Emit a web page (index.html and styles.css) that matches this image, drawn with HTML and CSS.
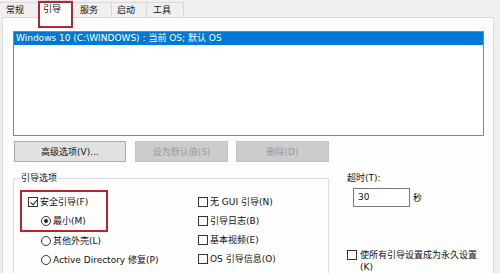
FILE: index.html
```html
<!DOCTYPE html>
<html lang="zh-CN">

<head>
    <meta charset="UTF-8">
    <meta name="viewport" content="width=device-width, initial-scale=1.0">
    <title>系统配置</title>
    <link rel="stylesheet" href="styles.css">
</head>

<body>
    <div class="tabs">
        <div class="tab tab-first">常规</div>
        <div class="tab tab-active">引导</div>
        <div class="tab">服务</div>
        <div class="tab">启动</div>
        <div class="tab">工具</div>
    </div>

    <div class="panel">
        <div class="os-list">
            <div class="os-item selected">Windows 10 (C:\WINDOWS) : 当前 OS; 默认 OS</div>
        </div>

        <div class="btn-row">
            <button class="btn btn-wide">高级选项(V)...</button>
            <button class="btn" disabled>设为默认值(S)</button>
            <button class="btn" disabled>删除(D)</button>
        </div>

        <div class="options">
            <fieldset class="boot-options">
                <legend>引导选项</legend>
                <div class="opt-cols">
                    <div class="opt-col">
                        <div class="mark-box">
                            <div class="opt"><span class="check checked"></span>安全引导(F)</div>
                            <div class="opt sub"><span class="radio on"></span>最小(M)</div>
                        </div>
                        <div class="opt sub"><span class="radio"></span>其他外壳(L)</div>
                        <div class="opt sub"><span class="radio"></span>Active Directory 修复(P)</div>
                    </div>
                    <div class="opt-col opt-col-right">
                        <div class="opt"><span class="check"></span>无 GUI 引导(N)</div>
                        <div class="opt"><span class="check"></span>引导日志(B)</div>
                        <div class="opt"><span class="check"></span>基本视频(E)</div>
                        <div class="opt"><span class="check"></span>OS 引导信息(O)</div>
                    </div>
                </div>
            </fieldset>

            <div class="side">
                <div class="timeout-label">超时(T):</div>
                <div class="timeout-row">
                    <div class="timeout-input">30</div>
                    <span>秒</span>
                </div>
                <div class="opt perm">
                    <span class="check"></span>
                    <span>使所有引导设置成为永久设置<br>(K)</span>
                </div>
            </div>
        </div>
    </div>
</body>

</html>
```

FILE: styles.css
```css
body {
    margin: 0;
    height: 273px;
    overflow: hidden;
    background-color: #f0f0f0;
    color: #111;
    font-family: "DejaVu Sans", "Noto Sans CJK SC", sans-serif;
    font-size: 9px;
    line-height: 12px;
}

.tabs {
    display: flex;
    height: 17px;
    align-items: flex-end;
    position: relative;
    z-index: 1;
}

.tab {
    height: 15px;
    line-height: 15px;
    box-sizing: border-box;
    padding-left: 6px;
    width: 39px;
    border: 1px solid #d9d9d9;
    border-bottom: none;
    margin-left: -1px;
    background-color: #f0f0f0;
}

.tab-first {
    margin-left: 0;
    border-left: none;
}

.tab:nth-child(3) {
    padding-left: 7px;
    width: 40px;
}

.tab:nth-child(4) {
    padding-left: 5px;
    width: 36px;
}

.tab:nth-child(5) {
    width: 38px;
}

.tab-active {
    position: relative;
    height: 18px;
    line-height: 16px;
    width: 35px;
    padding-left: 4px;
    margin-bottom: -1px;
    background-color: #fdfdfd;
    z-index: 2;
}

.tab-active::after {
    content: "";
    position: absolute;
    left: -1px;
    top: 0;
    width: 35px;
    height: 27px;
    box-sizing: border-box;
    border: 2px solid #b3262d;
}

.panel {
    margin: 0 6px 0 2px;
    height: 300px;
    box-sizing: border-box;
    border: 1px solid #d9d9d9;
    background-color: #fdfdfd;
    padding: 13px 9px 0 10px;
}

.os-list {
    height: 105px;
    box-sizing: border-box;
    border: 1px solid #828790;
    background-color: #fff;
}

.os-item {
    height: 13px;
    line-height: 13px;
    padding-left: 2px;
}

.os-item.selected {
    background-color: #0078d7;
    color: #fff;
}

.btn-row {
    display: flex;
    gap: 8px;
    margin-top: 5px;
    padding-left: 1px;
}

.btn {
    width: 93px;
    height: 21px;
    padding: 0;
    font: inherit;
    color: #111;
    background-color: #e1e1e1;
    border: 1px solid #adadad;
}

.btn-wide {
    width: 112px;
    margin-right: 1px;
}

.btn:disabled {
    background-color: #cccccc;
    border-color: #c4c4c4;
    color: #9a9a9a;
}

.options {
    display: flex;
    margin-top: 10px;
}

.boot-options {
    width: 316px;
    min-width: 0;
    flex: none;
    margin: 0;
    padding: 0 0 40px 6px;
    box-sizing: border-box;
    border: 1px solid #dcdcdc;
}

.boot-options legend {
    padding: 0 1px;
    line-height: 12px;
}

.opt-cols {
    display: flex;
    padding-top: 6px;
}

.opt-col {
    width: 178px;
    flex: none;
}

.opt-col-right {
    width: auto;
    flex: 1;
    padding-top: 2px;
}

.mark-box {
    width: 88px;
    box-sizing: border-box;
    border: 2px solid #b3262d;
    margin-bottom: -1px;
    padding-left: 6px;
}

.opt {
    display: flex;
    align-items: center;
    height: 19px;
    white-space: nowrap;
}

.opt-col > .opt.sub {
    padding-left: 21px;
}

.mark-box .opt.sub {
    padding-left: 13px;
}

.check,
.radio {
    width: 10px;
    height: 10px;
    box-sizing: border-box;
    border: 1px solid #333;
    background-color: #fff;
    margin-right: 2px;
    flex: none;
    position: relative;
}

.radio {
    border-radius: 50%;
}

.radio.on::after {
    content: "";
    position: absolute;
    left: 2px;
    top: 2px;
    width: 4px;
    height: 4px;
    border-radius: 50%;
    background-color: #222;
}

.check.checked::after {
    content: "";
    position: absolute;
    left: 2.5px;
    top: 0.5px;
    width: 3px;
    height: 5.5px;
    border: solid #222;
    border-width: 0 1px 1px 0;
    transform: rotate(40deg);
}

.side {
    flex: 1;
    margin-left: 18px;
}

.timeout-row {
    display: flex;
    align-items: center;
    gap: 3px;
    margin: 4px 0 0 6px;
}

.timeout-input {
    width: 57px;
    height: 19px;
    line-height: 17px;
    box-sizing: border-box;
    border: 1px solid #7a7a7a;
    background-color: #fff;
    padding-left: 4px;
}

.opt.perm {
    height: auto;
    align-items: flex-start;
    margin-top: 42px;
    line-height: 12px;
}

.opt.perm .check {
    margin-top: 1px;
    margin-right: 3px;
}
```
